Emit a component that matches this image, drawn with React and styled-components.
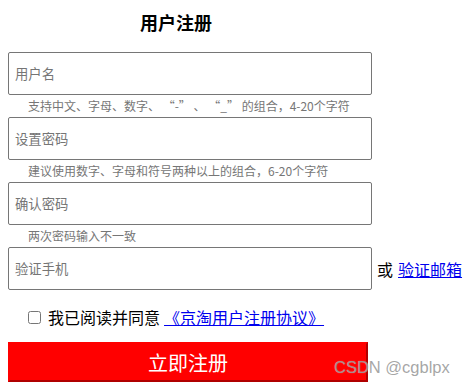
import React from "react";
import styled, { createGlobalStyle } from "styled-components";

const Global = createGlobalStyle`
  html, body { margin: 0; padding: 0; background: #fff; }
  body { font-family: "Noto Sans CJK SC", "Noto Sans", sans-serif; color: #000; }
`;

const Page = styled.div`
  position: relative;
  width: 465px;
  height: 388px;
  padding: 10px 8px 0;
  box-sizing: border-box;
  overflow: hidden;
`;

const Title = styled.h3`
  width: 336px;
  margin: 0 0 18px;
  font-size: 18px;
  line-height: 24px;
  font-weight: bold;
  text-align: center;
`;

const Field = styled.div`
  display: flex;
  flex-direction: column;
`;

const InputRow = styled.div`
  display: flex;
  align-items: center;
`;

const TextInput = styled.input`
  box-sizing: border-box;
  flex-shrink: 0;
  width: 364px;
  height: 43px;
  margin: 0;
  padding: 0 6px;
  border: 1px solid #767676;
  border-radius: 2px;
  font-family: "Noto Sans CJK SC", sans-serif;
  font-size: 13.33px;
  outline: none;
  &::placeholder { color: #757575; }
`;

const Hint = styled.div`
  height: 22px;
  line-height: 22px;
  padding-left: 20px;
  font-size: 12px;
  color: #767676;
  white-space: nowrap;
`;

const Or = styled.span`
  margin-left: 5px;
  font-size: 16px;
  line-height: 22px;
  white-space: nowrap;
`;

const Link = styled.a`
  color: #0000ee;
  text-decoration: underline;
  font-size: 16px;
  margin-left: ${(p) => p.$gap || 0}px;
  white-space: nowrap;
`;

const AgreeRow = styled.label`
  display: flex;
  align-items: center;
  height: 22px;
  margin-top: 16px;
  padding-left: 20px;
  font-size: 16px;
  line-height: 22px;
`;

const Check = styled.input`
  width: 13px;
  height: 13px;
  margin: 0 7px 0 0;
`;

const SubmitButton = styled.button`
  display: block;
  box-sizing: border-box;
  width: 360px;
  height: 40px;
  margin-top: 14px;
  padding: 0;
  background: #ff0000;
  color: #fff;
  font-family: "Noto Sans CJK SC", sans-serif;
  font-size: 20px;
  border-style: solid;
  border-width: 2px;
  border-color: #ff0000 #b00000 #b00000 #ff0000;
  border-radius: 0;
`;

const Watermark = styled.div`
  position: absolute;
  left: 334px;
  top: 357px;
  font-family: "Liberation Sans", Arial, sans-serif;
  font-size: 16.5px;
  line-height: 20px;
  color: rgba(150, 150, 150, 0.85);
  text-shadow: 0 0 1px rgba(255, 255, 255, 0.5);
  pointer-events: none;
  white-space: nowrap;
`;

const fields = [
  { ph: "用户名", hint: "支持中文、字母、数字、 “-” 、 “_” 的组合，4-20个字符" },
  { ph: "设置密码", hint: "建议使用数字、字母和符号两种以上的组合，6-20个字符" },
  { ph: "确认密码", hint: "两次密码输入不一致" },
];

export default function App() {
  return (
    <>
      <Global />
      <Page>
        <Title>用户注册</Title>
        {fields.map((f) => (
          <Field key={f.ph}>
            <TextInput placeholder={f.ph} />
            <Hint>{f.hint}</Hint>
          </Field>
        ))}
        <InputRow>
          <TextInput placeholder="验证手机" />
          <Or>或</Or>
          <Link href="#" $gap={5}>验证邮箱</Link>
        </InputRow>
        <AgreeRow>
          <Check type="checkbox" />
          我已阅读并同意
          <Link href="#" $gap={4}>《京淘用户注册协议》</Link>
        </AgreeRow>
        <SubmitButton>立即注册</SubmitButton>
        <Watermark>CSDN @cgblpx</Watermark>
      </Page>
    </>
  );
}
